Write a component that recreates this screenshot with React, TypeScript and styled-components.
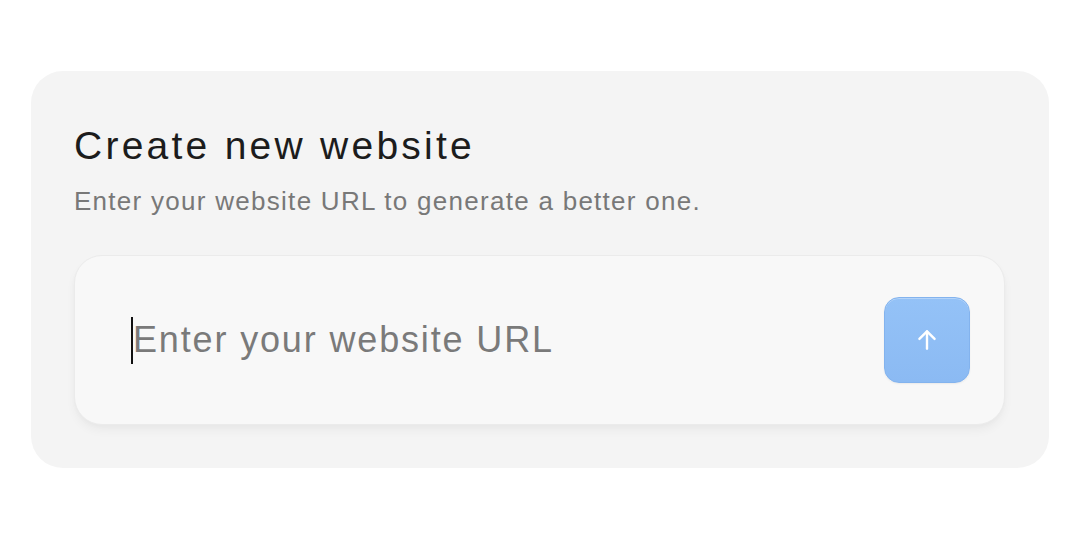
import React from "react";
import styled, { createGlobalStyle } from "styled-components";

const Global = createGlobalStyle`
  html, body { margin: 0; padding: 0; background: #ffffff; }
  body { font-family: "Liberation Sans", Arial, sans-serif; }
`;

const Page = styled.div`
  width: 1080px;
  height: 540px;
  padding: 71px 31px 0 31px;
  box-sizing: border-box;
`;

const Card = styled.section`
  width: 1018px;
  height: 397px;
  box-sizing: border-box;
  background: #f4f4f4;
  border-radius: 32px;
  padding: 51px 44px 0 43px;
  display: flex;
  flex-direction: column;
`;

const Title = styled.h1`
  margin: 0;
  font-family: "Liberation Sans", Arial, sans-serif;
  font-weight: 400;
  font-size: 39px;
  line-height: 48px;
  letter-spacing: 3.25px;
  color: #1c1c1c;
`;

const Subtitle = styled.p`
  margin: 15px 0 0 0;
  font-size: 26px;
  line-height: 32px;
  color: #787878;
  letter-spacing: 1.28px;
`;

const InputBox = styled.div`
  margin-top: 38px;
  height: 170px;
  box-sizing: border-box;
  background: #f8f8f8;
  border: 1px solid #ebebeb;
  border-radius: 28px;
  box-shadow: 0 6px 10px rgba(0, 0, 0, 0.04), 0 2px 4px rgba(0, 0, 0, 0.02);
  display: flex;
  align-items: center;
  padding: 0 34px 0 56px;
  gap: 20px;
`;

const Field = styled.div`
  flex: 1;
  display: flex;
  align-items: center;
`;

const Caret = styled.span`
  display: inline-block;
  width: 2px;
  height: 47px;
  background: #111;
`;

const Placeholder = styled.span`
  font-size: 36px;
  line-height: 48px;
  letter-spacing: 1.85px;
  color: #7a7a7a;
`;

const SendButton = styled.button`
  width: 86px;
  height: 86px;
  border-radius: 15px;
  border: 1px solid #83b3ee;
  background: linear-gradient(180deg, #94c2f7 0%, #8bbaf3 100%);
  box-shadow: inset 0 1px 0 rgba(255, 255, 255, 0.3), 0 1px 2px rgba(0, 0, 0, 0.06);
  display: flex;
  align-items: center;
  justify-content: center;
  padding: 0;
  cursor: pointer;
`;

export default function App() {
  return (
    <>
      <Global />
      <Page>
        <Card>
          <Title>Create new website</Title>
          <Subtitle>Enter your website URL to generate a better one.</Subtitle>
          <InputBox>
            <Field>
              <Caret />
              <Placeholder>Enter your website URL</Placeholder>
            </Field>
            <SendButton aria-label="Submit">
              <svg width="26" height="26" viewBox="0 0 24 24" fill="none" stroke="#ffffff" strokeWidth="2.2" strokeLinecap="round" strokeLinejoin="round">
                <path d="M12 20V4" />
                <path d="M5 11l7-7 7 7" />
              </svg>
            </SendButton>
          </InputBox>
        </Card>
      </Page>
    </>
  );
}
